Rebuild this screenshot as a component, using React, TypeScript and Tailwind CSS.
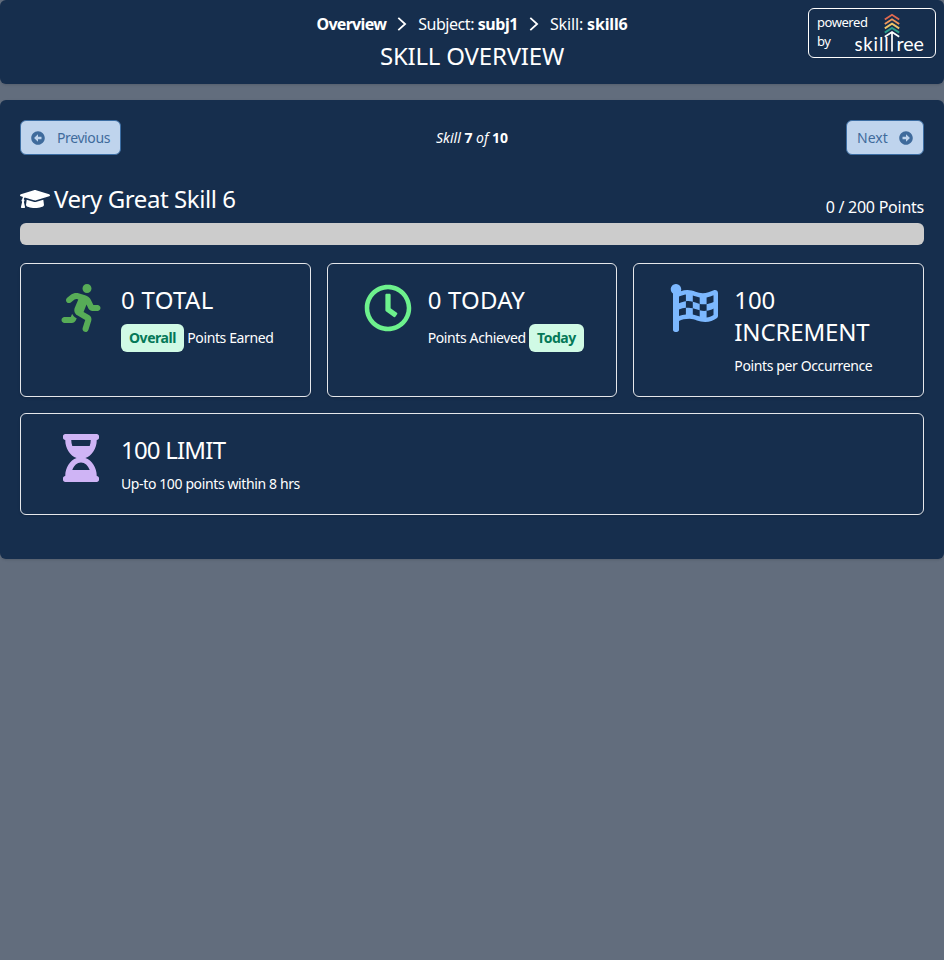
import {
  FaRunning, FaRegClock, FaFlagCheckered, FaHourglassHalf, FaGraduationCap,
  FaArrowAltCircleLeft, FaArrowAltCircleRight,
} from "react-icons/fa";
import type { ReactNode } from "react";

function Chevron() {
  return (
    <svg viewBox="0 0 10 14" className="h-[14px] w-[10px]" fill="none" stroke="currentColor" strokeWidth="1.8">
      <path d="M1.3 .8l6.8 6.2-6.8 6.2" />
    </svg>
  );
}

function Logo() {
  return (
    <svg viewBox="0 0 72 42" className="h-[42px] w-[72px]" fill="none" strokeWidth="1.9">
      <path d="M29.8 6.5 37 1.8l7.2 4.7" stroke="#e0694f" />
      <path d="M29.8 11 37 6.3l7.2 4.7" stroke="#f0975a" />
      <path d="M29.8 15.4 37 10.7l7.2 4.7" stroke="#edc468" />
      <path d="M29.8 19.6 37 14.9l7.2 4.7" stroke="#2a9d8a" />
      <path d="M29.8 23.8 37 19l7.2 4.8M37 19v19.6" stroke="#fff" strokeWidth="1.7" />
      <text x="-0.5" y="38.4" textLength="34" fontSize="18.5" fill="#fff" className="font-['Lato',sans-serif]">skill</text>
      <text x="41.5" y="38.4" textLength="27.5" lengthAdjust="spacingAndGlyphs" fontSize="18.5" fill="#fff" className="font-['Lato',sans-serif]">ree</text>
    </svg>
  );
}

function Tag({ children }: { children: ReactNode }) {
  return <span className="inline-flex h-7 items-center rounded-md bg-[#d0fae5] px-2 font-bold tracking-[-0.45px] text-[#047857]">{children}</span>;
}

function Stat({ icon, title, children }: { icon: ReactNode; title: ReactNode; children: ReactNode }) {
  return (
    <section className="flex rounded-md border border-[#e5e7eb] pt-5 shadow-sm">
      <div className="ml-9 flex w-12 shrink-0 justify-center">{icon}</div>
      <div className="ml-4 pr-10">
        <h3 className="text-2xl leading-8">{title}</h3>
        <div className="mt-2 whitespace-nowrap text-sm leading-5 tracking-[-0.38px]">{children}</div>
      </div>
    </section>
  );
}

export default function App() {
  return (
    <div className="min-h-screen bg-[#626d7d] font-['Noto_Sans',sans-serif] text-white">
      <header className="relative h-[84px] rounded-md bg-[#162e4d] pt-3 text-center shadow-sm">
        <nav className="flex h-6 items-center justify-center gap-[11px] text-base">
          <b className="tracking-[-0.7px]">Overview</b>
          <Chevron />
          <span className="tracking-[-0.45px]">Subject: <b>subj1</b></span>
          <Chevron />
          <span className="tracking-[-0.15px]">Skill: <b>skill6</b></span>
        </nav>
        <h1 className="mt-1 text-2xl leading-8 tracking-[-0.2px]">SKILL OVERVIEW</h1>
        <div className="absolute right-2 top-2 flex h-[50px] w-32 rounded-md border border-white pl-2">
          <div className="w-[38px] pt-1 text-left text-[13px] leading-[19px] tracking-[-0.45px]">powered<br />by</div>
          <div className="pt-1"><Logo /></div>
        </div>
      </header>
      <main className="mt-4 h-[459px] rounded-md bg-[#162e4d] px-5 pt-5 shadow-sm">
        <div className="grid grid-cols-3 items-center text-sm">
          <button className="flex h-[35px] w-[101px] items-center gap-3 rounded-md border border-[#3b6da3] bg-[#bfd4ed] pl-2.5 tracking-[-0.4px] text-[#3f6b9c]">
            <FaArrowAltCircleLeft className="size-3.5" />Previous
          </button>
          <div className="text-center"><i>Skill</i> <b>7</b> <i>of</i> <b>10</b></div>
          <button className="flex h-[35px] w-[78px] items-center gap-[11px] justify-self-end rounded-md border border-[#3b6da3] bg-[#bfd4ed] pl-2.5 text-[#3f6b9c]">
            Next<FaArrowAltCircleRight className="size-3.5" />
          </button>
        </div>
        <div className="mt-7 flex h-10 justify-between">
          <h2 className="flex h-8 items-center gap-1 text-2xl leading-8 tracking-[-0.42px]"><FaGraduationCap className="h-6 w-[30px]" />Very Great Skill 6</h2>
          <span className="self-end pb-1 leading-6 tracking-[-0.25px]">0 / 200 Points</span>
        </div>
        <div className="h-[22px] rounded-md bg-[#cccccc]" />
        <div className="mt-[18px] grid h-[134px] grid-cols-3 gap-4">
          <Stat title={<span className="tracking-[0.3px]">0 TOTAL</span>} icon={<FaRunning className="size-12 text-[#57ac57]" />}>
            <Tag>Overall</Tag> Points Earned
          </Stat>
          <Stat title={<span className="tracking-[0.2px]">0 TODAY</span>} icon={<FaRegClock className="size-12 text-[#6df18d]" />}>
            Points Achieved <Tag>Today</Tag>
          </Stat>
          <Stat title={<span className="tracking-[-0.15px]">100<br />INCREMENT</span>} icon={<FaFlagCheckered className="size-12 text-[#7cb8ff]" />}>
            Points per Occurrence
          </Stat>
        </div>
        <div className="mt-4 grid h-[102px]">
          <Stat title={<span className="tracking-[-0.8px]">100 LIMIT</span>} icon={<FaHourglassHalf className="size-12 text-[#cfb4f5]" />}>
            Up-to 100 points within 8 hrs
          </Stat>
        </div>
      </main>
    </div>
  );
}
